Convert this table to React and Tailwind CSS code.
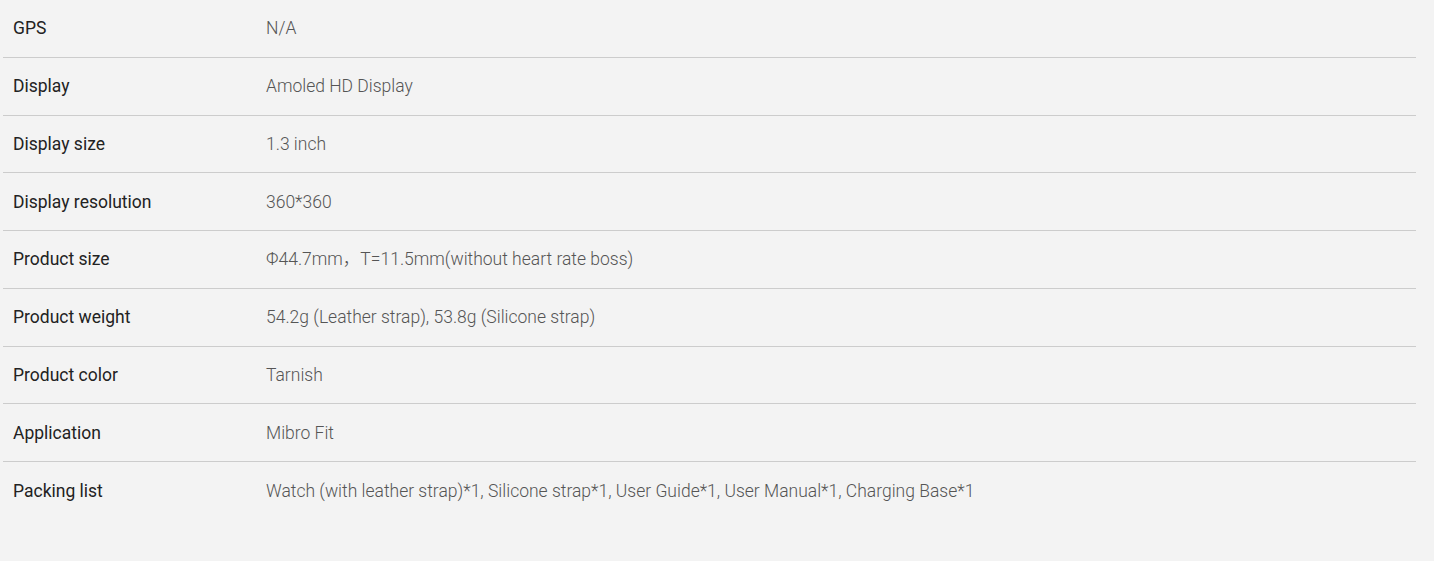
import React from "react";

const specs = [
  ["GPS", "N/A"],
  ["Display", "Amoled HD Display"],
  ["Display size", "1.3 inch"],
  ["Display resolution", "360*360"],
  ["Product size", "Φ44.7mm，T=11.5mm(without heart rate boss)"],
  ["Product weight", "54.2g (Leather strap), 53.8g (Silicone strap)"],
  ["Product color", "Tarnish"],
  ["Application", "Mibro Fit"],
  ["Packing list", "Watch (with leather strap)*1, Silicone strap*1, User Guide*1, User Manual*1, Charging Base*1"],
];

export default function App() {
  return (
    <div className="min-h-[561px] w-full bg-[#f3f3f3] pl-[3px] pr-[18px] font-['Roboto','Noto_Sans_CJK_SC',sans-serif] text-[17.5px]">
      <div className="flex flex-col">
        {specs.map(([label, value], i) => (
          <div
            key={label}
            className={`flex h-[57.75px] items-center ${i < specs.length - 1 ? "border-b border-[#cccccc]" : ""}`}
          >
            <div className="w-[263px] shrink-0 pl-[10px] text-[#222222]">{label}</div>
            <div className="font-light text-[#555555]">{value}</div>
          </div>
        ))}
      </div>
    </div>
  );
}
